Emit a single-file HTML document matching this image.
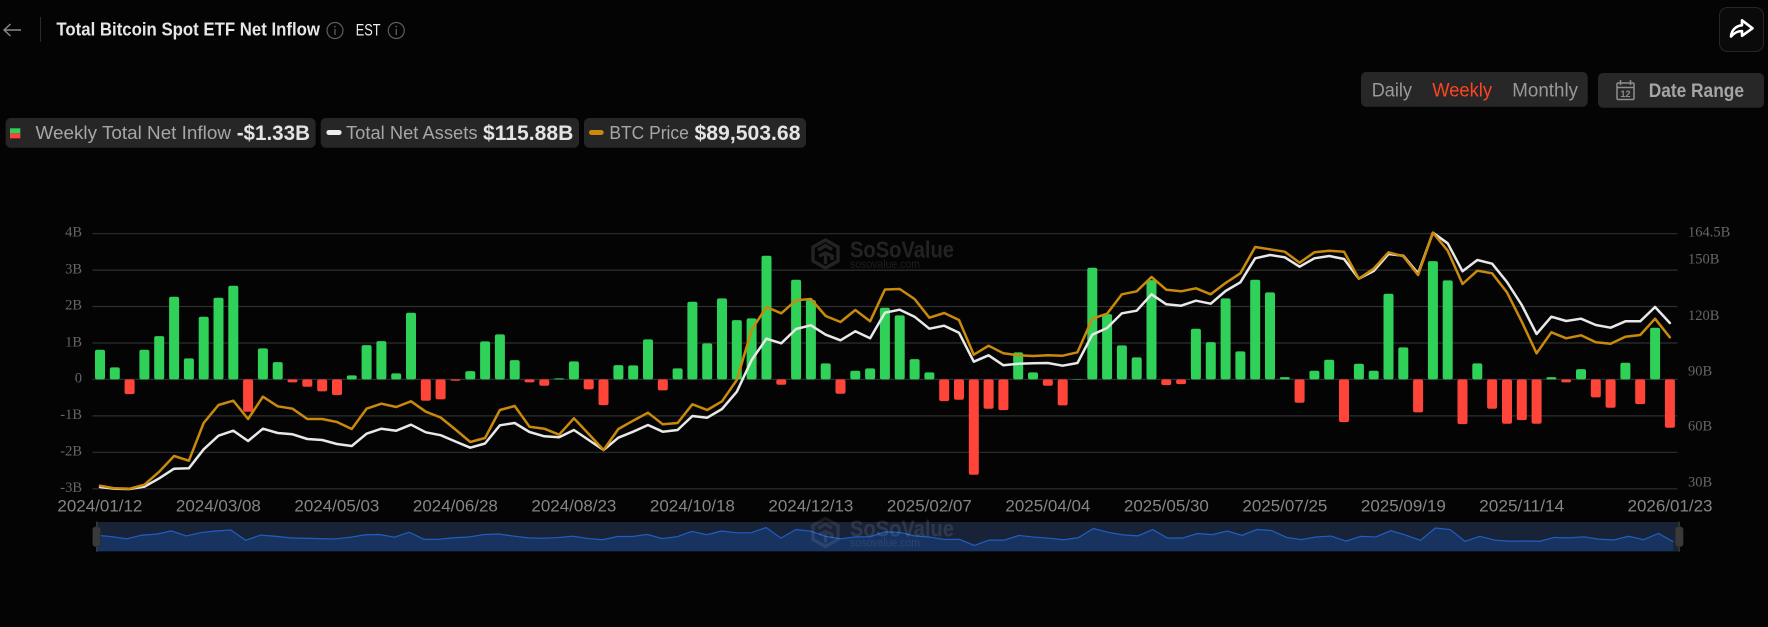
<!DOCTYPE html>
<html lang="en">
<head>
<meta charset="utf-8">
<title>Total Bitcoin Spot ETF Net Inflow</title>
<style>
html,body{margin:0;padding:0;background:#040404;width:1768px;height:627px;overflow:hidden}
svg{display:block}
text{font-family:"Liberation Sans",sans-serif}
.s{font-family:"Liberation Serif",serif;font-size:14.5px;fill:#666}
.d{font-size:17px;fill:#858585}
.l{font-size:18.5px;fill:#a6a6a6}
.v{font-size:21px;font-weight:700;fill:#e4e4e4}
.g rect{width:10px;rx:2px;fill:#30d158}
.r rect{width:10px;rx:2px;fill:#ff453a}
.n{vector-effect:non-scaling-stroke}
</style>
</head>
<body>
<svg width="1768" height="627" viewBox="0 0 1768 627" xmlns="http://www.w3.org/2000/svg">
<rect width="1768" height="627" fill="#040404"/>

<!-- header -->
<path d="M21 30H4M10.5 24L4 30L10.5 36" fill="none" stroke="#8a8a8a" stroke-width="1.4"/>
<rect x="40" y="17" width="1" height="25" fill="#2a2a2a"/>
<text x="56.4" y="35.7" font-size="18.5" font-weight="700" fill="#e6e6e6" textLength="263.6" lengthAdjust="spacingAndGlyphs">Total Bitcoin Spot ETF Net Inflow</text>
<circle cx="335" cy="30.5" r="8" fill="none" stroke="#5e5e5e" stroke-width="1.2"/>
<path d="M335 29v6M335 25.8v1.7" stroke="#5e5e5e" stroke-width="1.3"/>
<text x="355.7" y="35.7" font-size="16.5" fill="#eee" textLength="24.8" lengthAdjust="spacingAndGlyphs">EST</text>
<circle cx="396.3" cy="30.5" r="8" fill="none" stroke="#5e5e5e" stroke-width="1.2"/>
<path d="M396.3 29v6M396.3 25.8v1.7" stroke="#5e5e5e" stroke-width="1.3"/>

<rect x="1719.5" y="7.5" width="44" height="44" rx="8" fill="#0a0a0a" stroke="#262626"/>
<path d="M1731 36.5C1731.5 30 1736 25.7 1742 25.3V20.3L1752.5 28.3L1742 35.8V31C1738 31 1734 33 1731 36.5Z" fill="none" stroke="#fff" stroke-width="2.6" stroke-linejoin="round"/>

<!-- controls -->
<rect x="1361" y="72" width="226.7" height="34.7" rx="5" fill="#272727"/>
<text x="1371.7" y="96.7" font-size="19" fill="#999" textLength="40.3" lengthAdjust="spacingAndGlyphs">Daily</text>
<text x="1432.3" y="96.7" font-size="19" fill="#ff4522" textLength="59.7" lengthAdjust="spacingAndGlyphs">Weekly</text>
<text x="1512.3" y="96.7" font-size="19" fill="#999" textLength="65.7" lengthAdjust="spacingAndGlyphs">Monthly</text>

<rect x="1598" y="73" width="166" height="34.7" rx="5" fill="#272727"/>
<rect x="1617" y="83" width="17" height="16.5" rx="1.2" fill="none" stroke="#8e8e8e" stroke-width="1.5"/>
<path d="M1617 87.5H1634M1620.5 80V85M1630.5 80V85" stroke="#8e8e8e" stroke-width="1.5" fill="none"/>
<text x="1625.5" y="97" font-size="9" font-weight="700" fill="#8e8e8e" text-anchor="middle">12</text>
<text x="1648.7" y="97" font-size="19" font-weight="700" fill="#a5a5a5" textLength="95.3" lengthAdjust="spacingAndGlyphs">Date Range</text>

<!-- legend -->
<rect x="5.6" y="118" width="310" height="29.7" rx="5" fill="#262626"/>
<rect x="10" y="128.3" width="10.3" height="5" fill="#30d158"/>
<rect x="10" y="133.3" width="10.3" height="5" fill="#ff453a"/>
<text class="l" x="35.5" y="139" textLength="195.5" lengthAdjust="spacingAndGlyphs">Weekly Total Net Inflow</text>
<text class="v" x="236.7" y="140" textLength="73.3" lengthAdjust="spacingAndGlyphs">-$1.33B</text>

<rect x="320.7" y="118" width="258.3" height="29.7" rx="5" fill="#262626"/>
<rect x="326.4" y="130" width="15.2" height="5" rx="2.5" fill="#eee"/>
<text class="l" x="346" y="139" textLength="131.5" lengthAdjust="spacingAndGlyphs">Total Net Assets</text>
<text class="v" x="483" y="140" textLength="90.3" lengthAdjust="spacingAndGlyphs">$115.88B</text>

<rect x="584" y="118" width="222" height="29.7" rx="5" fill="#262626"/>
<rect x="589" y="130" width="14.7" height="5" rx="2.5" fill="#c98a0c"/>
<text class="l" x="609.4" y="139" textLength="79.4" lengthAdjust="spacingAndGlyphs">BTC Price</text>
<text class="v" x="694.5" y="140" textLength="106" lengthAdjust="spacingAndGlyphs">$89,503.68</text>

<!-- grid -->
<path d="M92.5 233.7H1677.5M92.5 270.1H1677.5M92.5 306.5H1677.5M92.5 343H1677.5M92.5 379.4H1677.5M92.5 415.9H1677.5M92.5 452.3H1677.5M92.5 488.8H1677.5" stroke="#2e2e2e" stroke-width="1.2" fill="none"/>

<!-- axis labels -->
<g class="s" text-anchor="end">
<text class="s" x="82" y="236.7">4B</text>
<text class="s" x="82" y="273.7">3B</text>
<text class="s" x="82" y="309.7">2B</text>
<text class="s" x="82" y="346.7">1B</text>
<text class="s" x="82" y="382.7">0</text>
<text class="s" x="82" y="419.2">-1B</text>
<text class="s" x="82" y="455.7">-2B</text>
<text class="s" x="82" y="492.2">-3B</text>
</g>
<text class="s" x="1688" y="236.7">164.5B</text>
<text class="s" x="1688" y="263.7">150B</text>
<text class="s" x="1688" y="320">120B</text>
<text class="s" x="1688" y="375.7">90B</text>
<text class="s" x="1688" y="430.7">60B</text>
<text class="s" x="1688" y="486.7">30B</text>

<!-- watermark -->
<g fill="none" stroke="#232323" stroke-width="3.4">
<path d="M825.5 240L838 247V261L825.5 268L813 261V247Z"/>
<path d="M818 250L825.5 245.5L832 249.5M825.5 253V264M819 256L825.5 253L832 256V260"/>
</g>
<text x="850" y="257.7" font-size="23" font-weight="700" fill="#232323" textLength="104" lengthAdjust="spacingAndGlyphs">SoSoValue</text>
<text x="850" y="268" font-size="11.5" fill="#1f1f1f" textLength="70" lengthAdjust="spacingAndGlyphs">sosovalue.com</text>

<!-- bars -->
<g class="g">
<rect x="95" y="349.7" height="29.7"/><rect x="109.8" y="367.4" height="12"/><rect x="139.4" y="349.7" height="29.7"/><rect x="154.2" y="336.1" height="43.3"/><rect x="169.1" y="296.7" height="82.7"/><rect x="183.9" y="358.4" height="21"/><rect x="198.7" y="316.7" height="62.7"/><rect x="213.5" y="297.7" height="81.7"/><rect x="228.3" y="285.7" height="93.7"/><rect x="257.9" y="348.4" height="31"/><rect x="272.7" y="362.1" height="17.3"/><rect x="346.8" y="375.4" height="4"/><rect x="361.6" y="345.1" height="34.3"/><rect x="376.4" y="341.1" height="38.3"/><rect x="391.2" y="373.4" height="6"/><rect x="406" y="312.7" height="66.7"/><rect x="465.3" y="371.1" height="8.3"/><rect x="480.1" y="341.4" height="38"/><rect x="494.9" y="334.4" height="45"/><rect x="509.7" y="360.1" height="19.3"/><rect x="554.1" y="378.4" height="1"/><rect x="568.9" y="361.4" height="18"/><rect x="613.4" y="365.1" height="14.3"/><rect x="628.2" y="365.4" height="14"/><rect x="643" y="339.4" height="40"/><rect x="672.6" y="368.4" height="11"/><rect x="687.4" y="301.7" height="77.7"/><rect x="702.2" y="343.4" height="36"/><rect x="717" y="298.4" height="81"/><rect x="731.8" y="320.1" height="59.3"/><rect x="746.6" y="318.4" height="61"/><rect x="761.5" y="255.7" height="123.7"/><rect x="791.1" y="279.7" height="99.7"/><rect x="805.9" y="300.1" height="79.3"/><rect x="820.7" y="363.4" height="16"/><rect x="850.3" y="370.7" height="8.7"/><rect x="865.1" y="368.4" height="11"/><rect x="879.9" y="307.7" height="71.7"/><rect x="894.7" y="315.4" height="64"/><rect x="909.6" y="359.1" height="20.3"/><rect x="924.4" y="372.4" height="7"/><rect x="1013.2" y="352.4" height="27"/><rect x="1028" y="372.4" height="7"/><rect x="1072.5" y="379" height=".4"/><rect x="1087.3" y="267.7" height="111.7"/><rect x="1102.1" y="314.1" height="65.3"/><rect x="1116.9" y="345.4" height="34"/><rect x="1131.7" y="357.4" height="22"/><rect x="1146.5" y="280.1" height="99.3"/><rect x="1190.9" y="328.7" height="50.7"/><rect x="1205.8" y="342.1" height="37.3"/><rect x="1220.6" y="298.4" height="81"/><rect x="1235.4" y="351.4" height="28"/><rect x="1250.2" y="279.7" height="99.7"/><rect x="1265" y="292.4" height="87"/><rect x="1279.8" y="377.1" height="2.3"/><rect x="1309.4" y="370.7" height="8.7"/><rect x="1324.2" y="359.7" height="19.7"/><rect x="1353.9" y="363.7" height="15.7"/><rect x="1368.7" y="370.7" height="8.7"/><rect x="1383.5" y="293.7" height="85.7"/><rect x="1398.3" y="347.4" height="32"/><rect x="1427.9" y="261.1" height="118.3"/><rect x="1442.7" y="280.4" height="99"/><rect x="1472.3" y="363.4" height="16"/><rect x="1546.4" y="377.1" height="2.3"/><rect x="1576" y="369.1" height="10.3"/><rect x="1620.4" y="362.7" height="16.7"/><rect x="1650.1" y="327.7" height="51.7"/>
</g>
<g class="r">
<rect x="124.6" y="379.4" height="14.7"/><rect x="243.1" y="379.4" height="32.3"/><rect x="287.5" y="379.4" height="3"/><rect x="302.3" y="379.4" height="7.3"/><rect x="317.2" y="379.4" height="12"/><rect x="332" y="379.4" height="15.7"/><rect x="420.8" y="379.4" height="21.3"/><rect x="435.6" y="379.4" height="20"/><rect x="450.4" y="379.4" height="1.3"/><rect x="524.5" y="379.4" height="3"/><rect x="539.3" y="379.4" height="6.3"/><rect x="583.7" y="379.4" height="10"/><rect x="598.5" y="379.4" height="25.7"/><rect x="657.8" y="379.4" height="11"/><rect x="776.3" y="379.4" height="5.3"/><rect x="835.5" y="379.4" height="14.3"/><rect x="939.2" y="379.4" height="21.7"/><rect x="954" y="379.4" height="20.3"/><rect x="968.8" y="379.4" height="95.3"/><rect x="983.6" y="379.4" height="29.3"/><rect x="998.4" y="379.4" height="30.7"/><rect x="1042.8" y="379.4" height="6.3"/><rect x="1057.7" y="379.4" height="26"/><rect x="1161.3" y="379.4" height="5.7"/><rect x="1176.1" y="379.4" height="4.7"/><rect x="1294.6" y="379.4" height="23.3"/><rect x="1339" y="379.4" height="42.7"/><rect x="1413.1" y="379.4" height="33"/><rect x="1457.5" y="379.4" height="44.7"/><rect x="1487.1" y="379.4" height="29.3"/><rect x="1502" y="379.4" height="44.3"/><rect x="1516.8" y="379.4" height="40.7"/><rect x="1531.6" y="379.4" height="44.3"/><rect x="1561.2" y="379.4" height="3"/><rect x="1590.8" y="379.4" height="18"/><rect x="1605.6" y="379.4" height="28.3"/><rect x="1635.2" y="379.4" height="24.7"/><rect x="1664.9" y="379.4" height="48.3"/>
</g>

<!-- lines -->
<g transform="translate(100 0) scale(14.81 1)" fill="none" stroke-linejoin="round" stroke-linecap="round">
<polyline class="n" stroke="#e8e8e8" stroke-width="2.5" points="0,487 1,488.7 2,489 3,486.7 4,478.3 5,468.7 6,468.3 7,449.3 8,435.7 9,430.7 10,441 11,428.7 12,433 13,434.3 14,439 15,440 16,444 17,446 18,433.7 19,428.7 20,430.7 21,424.7 22,432.3 23,435.2 24,441.5 25,447.7 26,443.5 27,425.3 28,423 29,432 30,436.3 31,437.3 32,430 33,440 34,450 35,437.7 36,431.7 37,425 38,431.7 39,430 40,416 41,417.7 42,409 43,391.7 44,360 45,338.7 46,343.3 47,329 48,325.3 49,334.7 50,340.3 51,331.3 52,338.3 53,312.7 54,309.7 55,316.7 56,328.7 57,325.7 58,332.7 59,361.7 60,355.3 61,365.3 62,363.7 63,363.3 64,363 65,365.7 66,363 67,334.7 68,328 69,313.3 70,310.7 71,294.3 72,304.3 73,305.7 74,300.7 75,303.7 76,291 77,282.3 78,258.3 79,255 80,257.3 81,266.7 82,258.3 83,256 84,259 85,278.7 86,271 87,254 88,255.7 89,273.3 90,232.7 91,243.3 92,271.3 93,260 94,263.7 95,282 96,305 97,334 98,316.7 99,321 100,318.7 101,325 102,327.7 103,321.3 104,321.3 105,307 106,323"/>
<polyline class="n" stroke="#c98a0c" stroke-width="2.5" points="0,485.7 1,488.3 2,488.7 3,484.7 4,471.7 5,456 6,460.7 7,423 8,405 9,400.7 10,419 11,396.7 12,406.3 13,408.7 14,419 15,419 16,422 17,429 18,408.7 19,403.7 20,407 21,401.3 22,411.7 23,417.5 24,429.5 25,442 26,438 27,410 28,406 29,426.7 30,428.7 31,434.7 32,418.3 33,434 34,450 35,429 36,420.7 37,412.7 38,424.3 39,423 40,404.3 41,410 42,401.3 43,380 44,330 45,307 46,313.3 47,300.3 48,299 49,316 50,322 51,310 52,321.3 53,289.5 54,289 55,299 56,317.7 57,313 58,320 59,354.7 60,345.7 61,353.3 62,355.3 63,356 64,355.3 65,355.7 66,352.3 67,318.7 68,313.7 69,294.3 70,291.3 71,277 72,289.7 73,291.3 74,288.3 75,294.3 76,283 77,273.3 78,247 79,249.3 80,251.7 81,262.7 82,252.3 83,250.7 84,251.7 85,278.7 86,268.7 87,252.3 88,256.3 89,275 90,232.7 91,250.7 92,284 93,270.7 94,273.3 95,292.3 96,321.7 97,353.3 98,332.3 99,338.3 100,335.3 101,342.3 102,343.7 103,336.7 104,335 105,318.7 106,337.3"/>
</g>

<!-- date axis -->
<text class="d" x="57.4" y="511.7" textLength="85" lengthAdjust="spacingAndGlyphs">2024/01/12</text>
<text class="d" x="175.9" y="511.7" textLength="85" lengthAdjust="spacingAndGlyphs">2024/03/08</text>
<text class="d" x="294.4" y="511.7" textLength="85" lengthAdjust="spacingAndGlyphs">2024/05/03</text>
<text class="d" x="412.9" y="511.7" textLength="85" lengthAdjust="spacingAndGlyphs">2024/06/28</text>
<text class="d" x="531.4" y="511.7" textLength="85" lengthAdjust="spacingAndGlyphs">2024/08/23</text>
<text class="d" x="649.9" y="511.7" textLength="85" lengthAdjust="spacingAndGlyphs">2024/10/18</text>
<text class="d" x="768.4" y="511.7" textLength="85" lengthAdjust="spacingAndGlyphs">2024/12/13</text>
<text class="d" x="886.9" y="511.7" textLength="85" lengthAdjust="spacingAndGlyphs">2025/02/07</text>
<text class="d" x="1005.4" y="511.7" textLength="85" lengthAdjust="spacingAndGlyphs">2025/04/04</text>
<text class="d" x="1123.9" y="511.7" textLength="85" lengthAdjust="spacingAndGlyphs">2025/05/30</text>
<text class="d" x="1242.4" y="511.7" textLength="85" lengthAdjust="spacingAndGlyphs">2025/07/25</text>
<text class="d" x="1360.9" y="511.7" textLength="85" lengthAdjust="spacingAndGlyphs">2025/09/19</text>
<text class="d" x="1479.2" y="511.7" textLength="85" lengthAdjust="spacingAndGlyphs">2025/11/14</text>
<text class="d" x="1627.5" y="511.7" textLength="85" lengthAdjust="spacingAndGlyphs">2026/01/23</text>

<!-- mini chart -->
<rect x="96" y="522" width="1582" height="29.5" fill="#192338"/>
<g transform="translate(97 537.65) scale(14.87 -.0272)">
<polygon fill="#183360" points="0,-491 0,89 1,36 2,-44 3,89 4,130 5,248 6,63 7,188 8,245 9,281 10,-97 11,93 12,52 13,-9 14,-22 15,-36 16,-47 17,12 18,103 19,115 20,18 21,200 22,-64 23,-60 24,-4 25,25 26,114 27,135 28,58 29,-9 30,-19 31,3 32,54 33,-30 34,-77 35,43 36,42 37,120 38,-33 39,33 40,233 41,108 42,243 43,178 44,183 45,371 46,-16 47,299 48,238 49,48 50,-43 51,26 52,33 53,215 54,192 55,61 56,21 57,-65 58,-61 59,-286 60,-88 61,-92 62,81 63,21 64,-19 65,-78 66,1 67,335 68,196 69,102 70,66 71,298 72,-17 73,-14 74,152 75,112 76,243 77,84 78,299 79,261 80,7 81,-70 82,26 83,59 84,-128 85,47 86,26 87,257 88,96 89,-99 90,355 91,297 92,-134 93,48 94,-88 95,-133 96,-122 97,-133 98,7 99,-9 100,31 101,-54 102,-85 103,50 104,-74 105,155 106,-145 106,-491"/>
<polyline class="n" fill="none" stroke="#1f5fc2" stroke-width="1.2" points="0,89 1,36 2,-44 3,89 4,130 5,248 6,63 7,188 8,245 9,281 10,-97 11,93 12,52 13,-9 14,-22 15,-36 16,-47 17,12 18,103 19,115 20,18 21,200 22,-64 23,-60 24,-4 25,25 26,114 27,135 28,58 29,-9 30,-19 31,3 32,54 33,-30 34,-77 35,43 36,42 37,120 38,-33 39,33 40,233 41,108 42,243 43,178 44,183 45,371 46,-16 47,299 48,238 49,48 50,-43 51,26 52,33 53,215 54,192 55,61 56,21 57,-65 58,-61 59,-286 60,-88 61,-92 62,81 63,21 64,-19 65,-78 66,1 67,335 68,196 69,102 70,66 71,298 72,-17 73,-14 74,152 75,112 76,243 77,84 78,299 79,261 80,7 81,-70 82,26 83,59 84,-128 85,47 86,26 87,257 88,96 89,-99 90,355 91,297 92,-134 93,48 94,-88 95,-133 96,-122 97,-133 98,7 99,-9 100,31 101,-54 102,-85 103,50 104,-74 105,155 106,-145"/>
</g>
<g fill="none" stroke="#fff" stroke-opacity=".09" stroke-width="3.4">
<path d="M825.5 518.5L838 525.5V539.5L825.5 546.5L813 539.5V525.5Z"/>
<path d="M818 528.5L825.5 524L832 528M825.5 531.5V542.5M819 534.5L825.5 531.5L832 534.5V538.5"/>
</g>
<text x="850" y="536.5" font-size="23" font-weight="700" fill="#fff" fill-opacity=".1" textLength="104" lengthAdjust="spacingAndGlyphs">SoSoValue</text>
<text x="850" y="546.5" font-size="11.5" fill="#fff" fill-opacity=".09" textLength="70" lengthAdjust="spacingAndGlyphs">sosovalue.com</text>

<rect x="96" y="521.7" width="1.6" height="30" fill="#3a3a3a"/>
<rect x="92.6" y="526.7" width="8" height="20" rx="3" fill="#3a3a3a" stroke="#262626" stroke-width=".6"/>
<rect x="1678.3" y="521.7" width="1.6" height="30" fill="#3a3a3a"/>
<rect x="1675.2" y="526.7" width="8" height="20" rx="3" fill="#3a3a3a" stroke="#262626" stroke-width=".6"/>
</svg>
</body>
</html>
